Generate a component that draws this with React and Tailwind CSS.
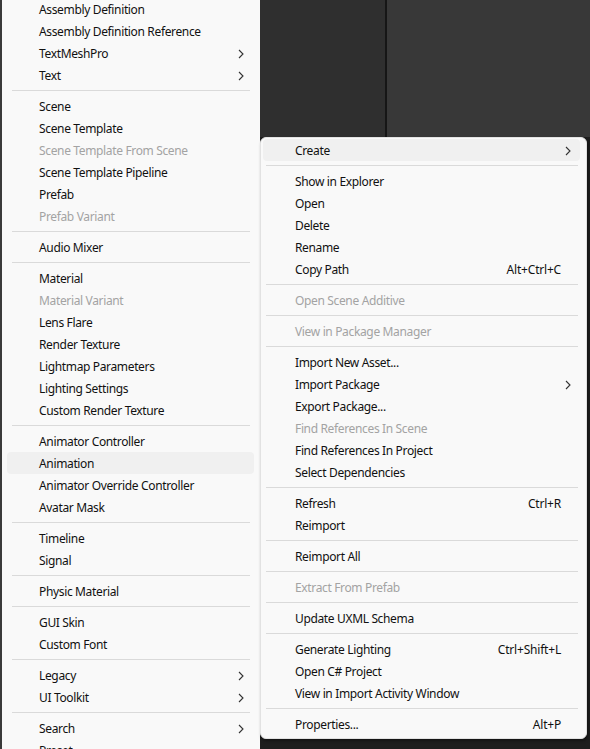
import React from "react";

const Chevron = () => (
  <svg width="6" height="10" viewBox="0 0 6 10" className="shrink-0">
    <path d="M1 1 L5 5 L1 9" fill="none" stroke="#333" strokeWidth="1.1" />
  </svg>
);

const leftItems = [
  ["Assembly Definition"],
  ["Assembly Definition Reference"],
  ["TextMeshPro", "sub"],
  ["Text", "sub"],
  ["-"],
  ["Scene"],
  ["Scene Template"],
  ["Scene Template From Scene", "dis"],
  ["Scene Template Pipeline"],
  ["Prefab"],
  ["Prefab Variant", "dis"],
  ["-"],
  ["Audio Mixer"],
  ["-"],
  ["Material"],
  ["Material Variant", "dis"],
  ["Lens Flare"],
  ["Render Texture"],
  ["Lightmap Parameters"],
  ["Lighting Settings"],
  ["Custom Render Texture"],
  ["-"],
  ["Animator Controller"],
  ["Animation", "hl"],
  ["Animator Override Controller"],
  ["Avatar Mask"],
  ["-"],
  ["Timeline"],
  ["Signal"],
  ["-"],
  ["Physic Material"],
  ["-"],
  ["GUI Skin"],
  ["Custom Font"],
  ["-"],
  ["Legacy", "sub"],
  ["UI Toolkit", "sub"],
  ["-"],
  ["Search", "sub"],
  ["Preset..."],
];

const rightItems = [
  ["Create", "sub hl"],
  ["-"],
  ["Show in Explorer"],
  ["Open"],
  ["Delete"],
  ["Rename"],
  ["Copy Path", "", "Alt+Ctrl+C"],
  ["-"],
  ["Open Scene Additive", "dis"],
  ["-"],
  ["View in Package Manager", "dis"],
  ["-"],
  ["Import New Asset..."],
  ["Import Package", "sub"],
  ["Export Package..."],
  ["Find References In Scene", "dis"],
  ["Find References In Project"],
  ["Select Dependencies"],
  ["-"],
  ["Refresh", "", "Ctrl+R"],
  ["Reimport"],
  ["-"],
  ["Reimport All"],
  ["-"],
  ["Extract From Prefab", "dis"],
  ["-"],
  ["Update UXML Schema"],
  ["-"],
  ["Generate Lighting", "", "Ctrl+Shift+L"],
  ["Open C# Project"],
  ["View in Import Activity Window"],
  ["-"],
  ["Properties...", "", "Alt+P"],
];

function Menu({ items, side }) {
  return items.map(([label, flags = "", shortcut], i) => {
    if (label === "-") {
      return (
        <div key={i} className={side === "left" ? "h-[9px] flex items-center pl-[5px] pr-[4px]" : "h-[9px] flex items-center pl-[3px] pr-[2px]"}>
          <div className="h-px w-full bg-[#dadada]" />
        </div>
      );
    }
    const hl = flags.includes("hl");
    const dis = flags.includes("dis");
    const sub = flags.includes("sub");
    return (
      <div
        key={i}
        className={
          "h-[22px] flex items-center pt-[2px] pl-[32px] rounded-[4px] " +
          (side === "left" ? "pr-[10px] " : "pr-[9px] ") +
          (hl ? "bg-[#f0f0f0] " : "") +
          (dis ? "text-[#a3a3a3]" : "text-[#111]")
        }
      >
        <span className="flex-1 whitespace-nowrap tracking-[-0.35px]">{label}</span>
        {shortcut && <span className="whitespace-nowrap pr-[10px] tracking-[-0.2px]">{shortcut}</span>}
        {sub && <Chevron />}
      </div>
    );
  });
}

export default function App() {
  return (
    <div
      className="w-[590px] h-[749px] overflow-hidden flex bg-[#1e1e1e] text-[12px] leading-none"
      style={{ fontFamily: '"Noto Sans", "Open Sans", sans-serif' }}
    >
      <div className="w-[2px] shrink-0 bg-[#3a3a3a]" />
      <div className="w-[258px] shrink-0 bg-[#f9f9f9] pl-[5px] pr-[6px] -mt-[2px]">
        <Menu items={leftItems} side="left" />
      </div>
      <div className="flex-1 flex flex-col">
        <div className="h-[137px] shrink-0 flex">
          <div className="w-[125px] bg-[#2f2f2f]" />
          <div className="w-[2px] bg-[#161616]" />
          <div className="flex-1 bg-[#383838]" />
        </div>
        <div className="w-[327px] bg-[#f9f9f9] rounded-[6px] border border-[#e2e2e2] pl-[2px] pr-[6px] pt-[1px] pb-[3px] shadow-[1px_2px_3px_rgba(0,0,0,0.35)]">
          <Menu items={rightItems} side="right" />
        </div>
      </div>
    </div>
  );
}
